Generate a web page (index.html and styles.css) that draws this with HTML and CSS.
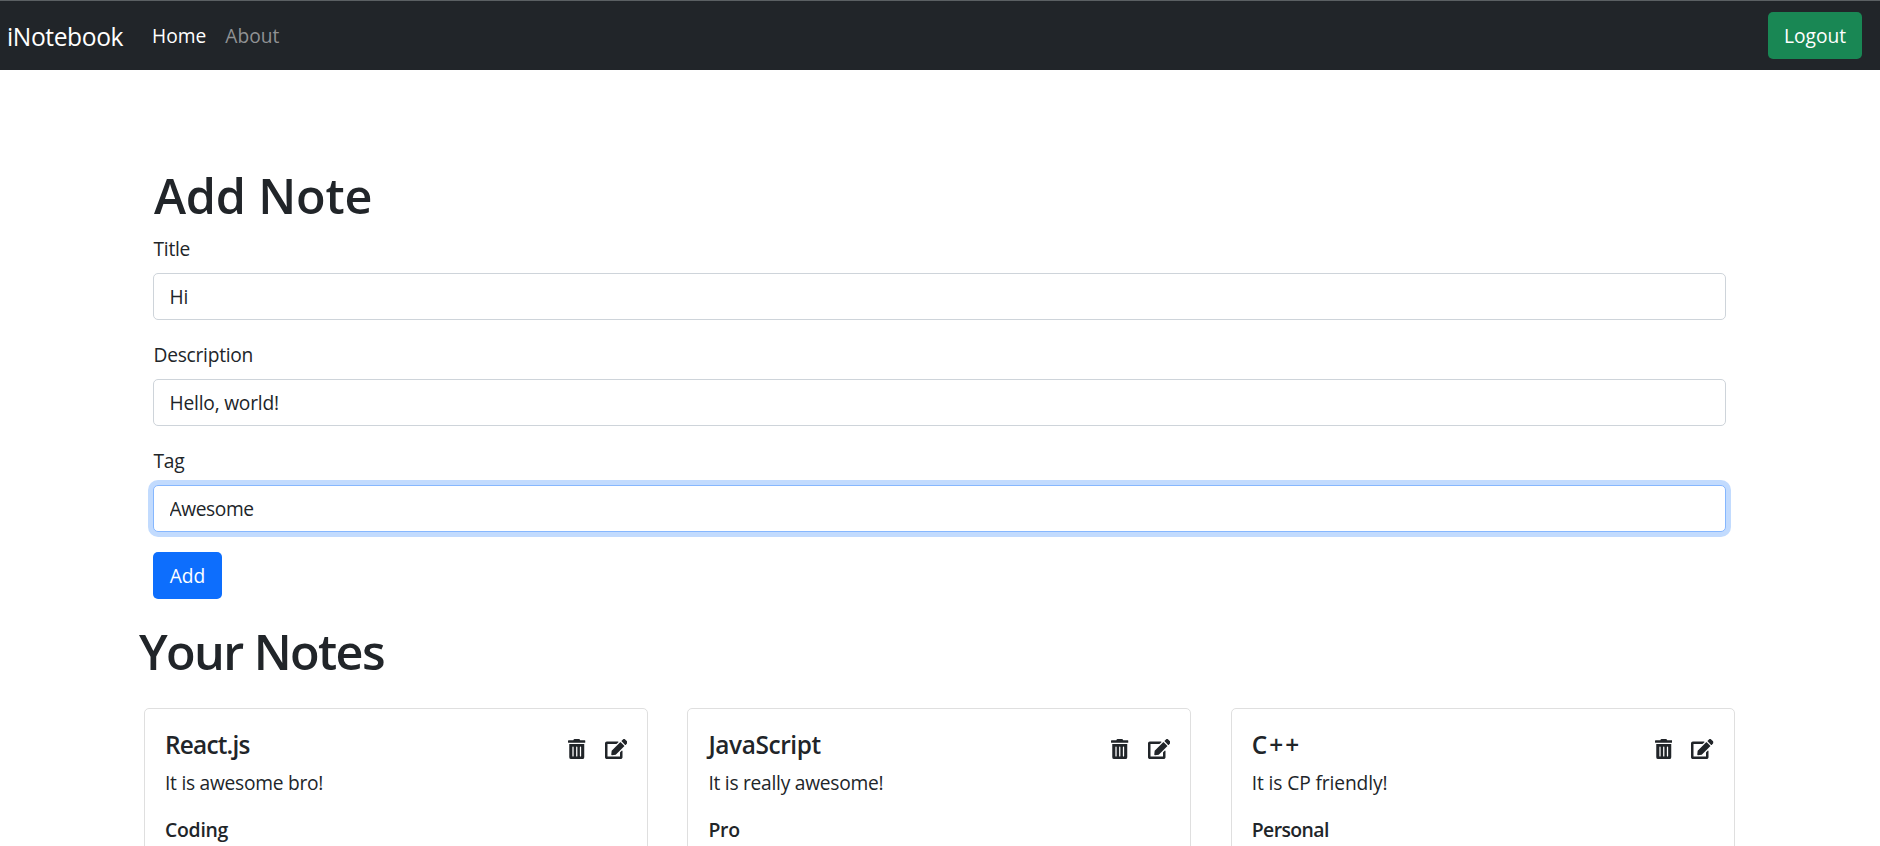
FILE: index.html
```html
<!DOCTYPE html>
<html lang="en">
<head>
<meta charset="utf-8">
<title>iNotebook</title>
<link rel="stylesheet" href="styles.css">
</head>
<body>
<svg class="sprite" aria-hidden="true">
  <symbol id="trash" viewBox="0 0 448 512"><path fill-rule="evenodd" d="M432 32H312l-9-19A24 24 0 0 0 281 0H167a24 24 0 0 0-22 13l-9 19H16A16 16 0 0 0 0 48v32a16 16 0 0 0 16 16h416a16 16 0 0 0 16-16V48a16 16 0 0 0-16-16zM32 128v336a48 48 0 0 0 48 48h288a48 48 0 0 0 48-48V128zm112 304a16 16 0 0 1-32 0V208a16 16 0 0 1 32 0zm96 0a16 16 0 0 1-32 0V208a16 16 0 0 1 32 0zm96 0a16 16 0 0 1-32 0V208a16 16 0 0 1 32 0z"/></symbol>
  <symbol id="edit" viewBox="0 0 576 512"><path d="M402.600 83.200l90.200 90.200c3.800 3.800 3.800 10 0 13.800L274.400 405.600l-92.800 10.300c-12.400 1.400-22.900-9.100-21.500-21.500l10.300-92.800L388.800 83.200c3.800-3.800 10-3.800 13.800 0zm162-22.900l-48.800-48.800c-15.200-15.200-39.900-15.200-55.200 0l-35.400 35.400c-3.800 3.800-3.800 10 0 13.800l90.200 90.200c3.800 3.800 10 3.800 13.800 0l35.400-35.400c15.200-15.300 15.200-40 0-55.200zM384 346.200V448H64V128h229.800c3.200 0 6.200-1.300 8.500-3.500l40-40c7.600-7.600 2.200-20.500-8.500-20.500H48C21.500 64 0 85.500 0 112v352c0 26.500 21.500 48 48 48h352c26.500 0 48-21.500 48-48V306.200c0-10.700-12.900-16-20.500-8.500l-40 40c-2.200 2.300-3.500 5.300-3.500 8.500z"/></symbol>
</svg>
<nav class="navbar">
  <a class="brand">iNotebook</a>
  <a class="nav-link active">Home</a>
  <a class="nav-link">About</a>
  <button class="btn btn-success">Logout</button>
</nav>
<main class="container">
  <section class="add-note">
    <h1>Add Note</h1>
    <div class="field"><label for="title">Title</label><input id="title" value="Hi"></div>
    <div class="field"><label for="description">Description</label><input id="description" value="Hello, world!"></div>
    <div class="field"><label for="tag">Tag</label><input id="tag" class="focused" value="Awesome"></div>
    <button class="btn btn-primary">Add</button>
  </section>
  <section class="notes">
    <h1 class="notes-heading">Your Notes</h1>
    <div class="cards">
      <article class="card">
        <div class="card-head"><h5 class="react">React.js</h5><svg class="trash"><use href="#trash"/></svg><svg class="edit"><use href="#edit"/></svg></div>
        <p>It is awesome bro!</p>
        <h6>Coding</h6>
      </article>
      <article class="card">
        <div class="card-head"><h5>JavaScript</h5><svg class="trash"><use href="#trash"/></svg><svg class="edit"><use href="#edit"/></svg></div>
        <p>It is really awesome!</p>
        <h6>Pro</h6>
      </article>
      <article class="card">
        <div class="card-head"><h5 class="cpp">C++</h5><svg class="trash"><use href="#trash"/></svg><svg class="edit"><use href="#edit"/></svg></div>
        <p class="wide">It is CP friendly!</p>
        <h6 class="tight">Personal</h6>
      </article>
    </div>
  </section>
</main>
</body>
</html>
```

FILE: styles.css
```css
* { box-sizing: border-box; }
html { overflow: hidden; }
body {
  margin: 0;
  height: 846px;
  overflow: hidden;
  background: #fff;
  color: #212529;
  font-family: "Open Sans", "Noto Sans", sans-serif;
  font-size: 19.2px;
  line-height: 30px;
  letter-spacing: -0.26px;
}
h1, h5, h6, p { margin: 0; }
button, input { font: inherit; letter-spacing: inherit; color: inherit; }
.sprite { display: none; }

.navbar {
  display: flex;
  align-items: center;
  height: 70px;
  padding: 0 18px 0 7px;
  border-top: 1px solid #5b6063;
  background: #212529;
  color: #fff;
}
.brand { font-size: 24.600px; letter-spacing: -0.4px; margin-right: 29px; padding-top: 2px; }
.nav-link { color: #909294; margin-right: 19px; letter-spacing: 0; }
.nav-link.active { color: #fff; }
.btn {
  height: 47px;
  padding: 0 15px;
  border: 0;
  border-radius: 5px;
  color: #fff;
}
.btn-success { width: 94px; margin-left: auto; background: #198754; letter-spacing: 0; }
.btn-primary { width: 69px; background: #0d6efd; display: block; letter-spacing: 0; }

.container { padding: 95px 124px 0; }
.add-note { padding: 0 30px 0 29px; }
h1 { font-size: 48.500px; font-weight: 560; line-height: 60px; letter-spacing: -0.2px; }
.add-note h1 { margin-bottom: 9px; padding-left: 1px; }
.field { margin-bottom: 20px; }
label { display: block; line-height: 29px; margin-bottom: 10px; padding-left: 0.500px; }
input {
  display: block;
  width: 100%;
  height: 47px;
  padding: 0 15.500px;
  border: 1px solid #ced4da;
  border-radius: 5px;
  outline: 0;
  background: #fff;
  letter-spacing: -0.2px;
}
.focused { border-color: #86b7fe; box-shadow: 0 0 0 5px #c2dbfe; letter-spacing: -0.4px; }

.notes { padding-top: 22px; }
.notes-heading { margin-left: 15px; letter-spacing: -1.600px; }
.cards {
  display: grid;
  grid-template-columns: repeat(3, 504px);
  gap: 39.400px;
  padding: 27px 20px 0;
}
.card {
  height: 180px;
  padding: 19px 20px 20px;
  border: 1px solid #dfdfdf;
  border-radius: 5px;
}
.card-head { display: flex; margin-bottom: 8px; height: 32px; }
h5 { flex: 1; font-size: 24.400px; font-weight: 560; line-height: 34px; letter-spacing: -0.4px; }
h6 { font-size: 19.4px; font-weight: 560; line-height: 24px; margin-top: 20px; }
.react { letter-spacing: -0.8px; }
.cpp { letter-spacing: 2px; }
.wide { letter-spacing: -0.12px; }
.tight { letter-spacing: -0.6px; }
.card svg { fill: #212529; height: 20px; margin-top: 11px; }
.trash { width: 17.500px; margin-right: 19px; }
.edit { width: 22.500px; }
```
